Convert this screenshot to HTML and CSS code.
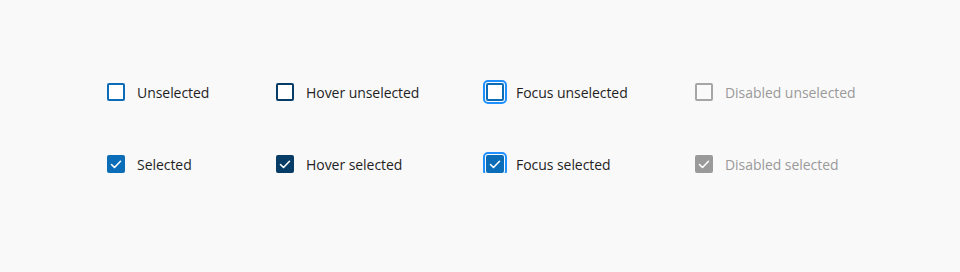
FILE: index.html
```html
<!DOCTYPE html>
<html>
<head>
<meta charset="utf-8">
<link rel="stylesheet" href="styles.css">
</head>
<body>
<div class="grid">
  <label class="item"><span class="box"></span><span class="text">Unselected</span></label>
  <label class="item"><span class="box hover"></span><span class="text">Hover unselected</span></label>
  <label class="item"><span class="box focus"></span><span class="text">Focus unselected</span></label>
  <label class="item disabled"><span class="box"></span><span class="text">Disabled unselected</span></label>

  <label class="item"><span class="box checked"><svg viewBox="0 0 18 18"><path d="M4.5 9.5 L7.5 12.5 L13.5 6.3"/></svg></span><span class="text">Selected</span></label>
  <label class="item"><span class="box checked hover"><svg viewBox="0 0 18 18"><path d="M4.5 9.5 L7.5 12.5 L13.5 6.3"/></svg></span><span class="text">Hover selected</span></label>
  <label class="item"><span class="box checked focus"><svg viewBox="0 0 18 18"><path d="M4.5 9.5 L7.5 12.5 L13.5 6.3"/></svg></span><span class="text">Focus selected</span></label>
  <label class="item disabled"><span class="box checked"><svg viewBox="0 0 18 18"><path d="M4.5 9.5 L7.5 12.5 L13.5 6.3"/></svg></span><span class="text">Disabled selected</span></label>
</div>
</body>
</html>
```
FILE: styles.css
```css
html, body {
  margin: 0;
  background: #f9f9f9;
}
body {
  font-family: "Open Sans", "Noto Sans", sans-serif;
  font-size: 14px;
  color: #1f1f1f;
}
.grid {
  display: grid;
  grid-template-columns: 169px 210px 209px auto;
  row-gap: 54px;
  padding: 83px 0 0 107px;
}
.item {
  display: flex;
  align-items: center;
  gap: 12px;
  height: 18px;
  line-height: 18px;
}
.text {
  padding-top: 2px;
  letter-spacing: -0.05px;
}
.box {
  box-sizing: border-box;
  width: 18px;
  height: 18px;
  border: 2px solid #0b6cb8;
  border-radius: 2px;
  background: #ffffff;
  flex: none;
  display: flex;
  align-items: center;
  justify-content: center;
}
.box.hover {
  border-color: #073c66;
}
.box.focus {
  outline: 2px solid #1e90ff;
  outline-offset: 1px;
}
.box.checked {
  background: #0b6cb8;
}
.box.checked.hover {
  background: #073c66;
}
.box svg {
  width: 18px;
  height: 18px;
  flex: none;
}
.box path {
  fill: none;
  stroke: #ffffff;
  stroke-width: 1.6;
  stroke-linecap: round;
  stroke-linejoin: round;
}
.disabled .text {
  color: #9a9a9a;
}
.disabled .box {
  border-color: #a6a6a6;
  background: #fafafa;
}
.disabled .box.checked {
  background: #9a9a9a;
  border-color: #9a9a9a;
}
```
